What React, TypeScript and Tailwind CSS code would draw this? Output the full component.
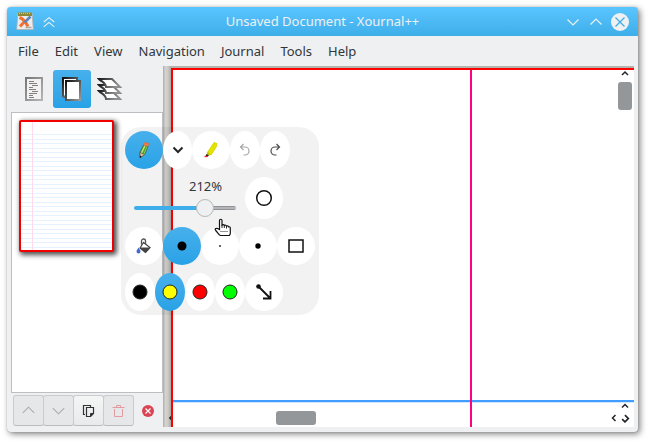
import React, { useState } from "react";

const menus = ["File", "Edit", "View", "Navigation", "Journal", "Tools", "Help"];

function Chevron({ d, size = 16, width = 1, className = "" }: { d: string; size?: number; width?: number; className?: string }) {
  return (
    <svg width={size} height={size} viewBox="0 0 16 16" fill="none" stroke="currentColor" strokeWidth={width} className={className} aria-hidden="true">
      <path d={d} />
    </svg>
  );
}

function AppIcon() {
  return (
    <svg width="18" height="19" viewBox="0 0 18 19" aria-hidden="true">
      <path d="M2 1h14l1.300 16.500H.7z" fill="#ececec" stroke="#b8b2ac" strokeWidth=".8" />
      <path d="M2 .5h14v3.500H2z" fill="#8c8a34" />
      <path d="M3 1.500h12" stroke="#d8cc50" strokeWidth="1" strokeDasharray="1 1" />
      <path d="M3.500 5.500c3 1 6 4 8.500 9" stroke="#f27130" strokeWidth="3" fill="none" />
      <path d="M9 9 4 14.500" stroke="#f27130" strokeWidth="3" />
      <path d="M14.500 4.500 8.500 10.500" stroke="#5b86bd" strokeWidth="2.600" />
      <path d="M9.500 15.500h6" stroke="#a9a9a9" strokeWidth="1.500" />
    </svg>
  );
}

function TextPageIcon() {
  return (
    <svg width="18" height="24" viewBox="0 0 18 24" fill="none" aria-hidden="true">
      <defs>
        <linearGradient id="pageEdge" x1="0" y1="0" x2="1" y2="1">
          <stop offset="0" stopColor="#777" />
          <stop offset="1" stopColor="#b5b5b5" />
        </linearGradient>
      </defs>
      <rect x="1" y="1" width="16" height="22" fill="#f2f2f2" stroke="url(#pageEdge)" strokeWidth="2" />
      <path d="M4 4.500h5M4 6.500h8M7 8.500h6M4 10.500h4M4 12.500h7M7 14.500h6M4 16.500h8M4 18.500h4M4 20.500h5" stroke="#808080" />
    </svg>
  );
}

function PagesIcon() {
  return (
    <svg width="20" height="24" viewBox="0 0 20 24" aria-hidden="true">
      <defs>
        <linearGradient id="sheetEdge" x1="0" y1="0" x2="1" y2="1">
          <stop offset="0" stopColor="#111" />
          <stop offset="1" stopColor="#999" />
        </linearGradient>
      </defs>
      <path d="M1 20V1h14v3" fill="#fff" stroke="url(#sheetEdge)" strokeWidth="2" />
      <path d="M1 20h3" stroke="#666" strokeWidth="2" />
      <rect x="4" y="4" width="14" height="19" fill="#fff" stroke="url(#sheetEdge)" strokeWidth="2" />
    </svg>
  );
}

function LayersIcon() {
  return (
    <svg width="26" height="24" viewBox="0 0 26 24" strokeWidth="2" aria-hidden="true">
      <defs>
        <linearGradient id="layerEdge" x1="0" y1="0" x2="1" y2="0.3">
          <stop offset="0" stopColor="#1c1c1c" />
          <stop offset="1" stopColor="#8f8f8f" />
        </linearGradient>
      </defs>
      {[14, 8, 2].map((y) => (
        <path key={y} d={`M2 ${y}h13l8 8H9c0-4-4-5-7-8z`} fill="#fff" stroke="url(#layerEdge)" />
      ))}
    </svg>
  );
}

function PencilIcon() {
  return (
    <svg width="12" height="18" viewBox="0 0 12 18" aria-hidden="true">
      <path d="M5.500 4 10 5.500 7 13 2 16.500V11z" fill="#4f9a34" stroke="#4d5a37" strokeWidth=".7" />
      <path d="M7 4.500 3.500 12" stroke="#b4ec80" strokeWidth="1.500" />
      <path d="m9 5.500-3 7.500" stroke="#7fd058" strokeWidth="1" />
      <path d="m2 11.500 4.500 2L2 17z" fill="#e0c59b" stroke="#4d4a37" strokeWidth=".6" />
      <path d="m2 14.500 1.800 1L2 17z" fill="#111" />
      <path d="m5.500 4 1-2.500 4.500 1L10 5.500z" fill="#f47a48" stroke="#c4653f" strokeWidth=".5" />
    </svg>
  );
}

function HighlighterIcon() {
  return (
    <svg width="16" height="18" viewBox="0 0 16 18" aria-hidden="true">
      <path d="m11 1.500 3 1-.5 3L8 14l-4-2z" fill="#e3e300" stroke="#d2d200" strokeWidth=".8" />
      <path d="m5 10.500-1.500 3 1.500 1 2.500-.5" fill="#c5c500" />
      <path d="m3.500 13 2.500 1.500L4 16H2z" fill="#1d1d1d" />
      <path d="M1.500 15.500h3" stroke="#e33" strokeWidth="1.400" />
    </svg>
  );
}

function UndoIcon({ flip = false }: { flip?: boolean }) {
  return (
    <svg width="12" height="14" viewBox="0 0 12 14" fill="none" stroke={flip ? "#4d4d4d" : "#a6a6a6"} strokeWidth="1.200" className={flip ? "-scale-x-100" : ""} aria-hidden="true">
      <path d="M4.500 1 1.500 4l3 3M1.500 4h4.500a4 4 0 1 1 0 8H4.500" />
    </svg>
  );
}

function BucketIcon() {
  return (
    <svg width="16" height="16" viewBox="0 0 16 16" aria-hidden="true">
      <path d="M5.500 6.500V3a2 2 0 0 1 4 0v4" fill="none" stroke="#555" strokeWidth="1.300" />
      <path d="m7.500 4.500 6.500 5-4.500 5-5.500-4.500z" fill="#fff" stroke="#444" strokeWidth="1.200" />
      <path d="M4 9.500h10.500l-5 5.500z" fill="#444" />
      <path d="M2.500 9.500c1 2 2 2.700 2 4a2 2 0 0 1-4 0c0-1.300 1-2 2-4z" fill="#4468cf" />
    </svg>
  );
}

function Dot({ r, fill = "#000", ring = false }: { r: number; fill?: string; ring?: boolean }) {
  return (
    <svg width="18" height="18" viewBox="0 0 18 18" aria-hidden="true">
      <circle cx="9" cy="9" r={r} fill={fill} stroke={ring ? "#222" : "none"} strokeWidth="1" />
    </svg>
  );
}

const toolWidths = { slim: "w-[29px]", narrow: "w-[30px]", wide: "w-[38px]" };

function ToolButton({ label, active = false, width = "wide", tall = false, children }: { label: string; active?: boolean; width?: keyof typeof toolWidths; tall?: boolean; children: React.ReactNode }) {
  return (
    <button
      aria-label={label}
      className={`flex shrink-0 items-center justify-center rounded-[50%] text-[#232629] ${toolWidths[width]} ${tall ? "h-[42px]" : "h-[38px]"} ${active ? "bg-linear-to-b from-[#47b0ec] to-[#27a2e6]" : "bg-white"}`}
    >
      {children}
    </button>
  );
}

function Toolbox() {
  const [zoom, setZoom] = useState(74);
  return (
    <section aria-label="Floating toolbox" className="absolute left-[114px] top-[61px] flex flex-col gap-2 rounded-[20px] bg-black/5 p-1">
      <div className="flex">
        <ToolButton label="Pen" active><PencilIcon /></ToolButton>
        <ToolButton label="Pen options" width="slim"><Chevron d="m3.500 5.500 4.500 4.500 4.500-4.500" width={2} /></ToolButton>
        <ToolButton label="Highlighter"><HighlighterIcon /></ToolButton>
        <ToolButton label="Undo" width="narrow"><UndoIcon /></ToolButton>
        <ToolButton label="Redo" width="narrow"><UndoIcon flip /></ToolButton>
      </div>
      <div className="flex">
        <div className="flex w-[120px] flex-col gap-0.5 px-[9px]">
          <label htmlFor="zoom" className="pl-[55px] leading-[18px]">212%</label>
          <input
            id="zoom"
            type="range"
            min={0}
            max={100}
            value={zoom}
            onChange={(e) => setZoom(Number(e.target.value))}
            className="h-[22px] w-full appearance-none bg-transparent [&::-webkit-slider-runnable-track]:h-1 [&::-webkit-slider-runnable-track]:rounded-full [&::-webkit-slider-runnable-track]:bg-[linear-gradient(to_right,#3daee9_70%,transparent_70%),linear-gradient(to_bottom,#8f9194_1px,#b4b6b8_1px,#b4b6b8_3px,#8f9194_3px)] [&::-webkit-slider-thumb]:-mt-[7px] [&::-webkit-slider-thumb]:size-[18px] [&::-webkit-slider-thumb]:appearance-none [&::-webkit-slider-thumb]:rounded-full [&::-webkit-slider-thumb]:border [&::-webkit-slider-thumb]:border-[#b4b6b8] [&::-webkit-slider-thumb]:bg-[#eff0f1]"
          />
        </div>
        <ToolButton label="Draw ellipse" tall>
          <svg width="18" height="18" viewBox="0 0 18 18" fill="none" stroke="#111" strokeWidth="1.500" aria-hidden="true"><circle cx="9" cy="9" r="7.300" /></svg>
        </ToolButton>
      </div>
      <div className="flex">
        <ToolButton label="Fill"><BucketIcon /></ToolButton>
        <ToolButton label="Thick" active><Dot r={4.5} /></ToolButton>
        <ToolButton label="Very fine"><Dot r={1} fill="#333" /></ToolButton>
        <ToolButton label="Fine"><Dot r={2.7} /></ToolButton>
        <ToolButton label="Draw rectangle">
          <svg width="16" height="14" viewBox="0 0 16 14" fill="none" stroke="#111" strokeWidth="1.500" aria-hidden="true"><rect x="1" y="1" width="14" height="12" /></svg>
        </ToolButton>
      </div>
      <div className="flex">
        <ToolButton label="Black" width="narrow"><Dot r={7} ring /></ToolButton>
        <ToolButton label="Yellow" width="narrow" active><Dot r={7} fill="#ffff00" ring /></ToolButton>
        <ToolButton label="Red" width="narrow"><Dot r={7} fill="#ff0000" ring /></ToolButton>
        <ToolButton label="Green" width="narrow"><Dot r={7} fill="#00ff00" ring /></ToolButton>
        <ToolButton label="Draw arrow">
          <svg width="18" height="18" viewBox="0 0 18 18" fill="none" stroke="#111" strokeWidth="1.800" aria-hidden="true">
            <circle cx="3.500" cy="3.500" r="2.300" fill="#111" stroke="none" />
            <path d="m3.500 3.500 12 12M15.500 8v7.500H8" />
          </svg>
        </ToolButton>
      </div>
      <svg width="18" height="20" viewBox="0 0 18 20" className="absolute left-[93px] top-[91px]" aria-hidden="true">
        <path d="M5.500 11.500V2.500a1.200 1.200 0 0 1 2.500 0v4.500c1-.8 2-.4 2.300.400 1-.6 1.900-.1 2.200.6 1-.4 2 0 2.100.8 1-.2 1.700.3 1.700 1.200v5c0 1-.3 2-1 2.500H6.500c-1.700-.5-2.500-2.500-4.800-5-.6-.8-.5-1.600 0-2 1-.6 2.300 0 3.800 1z" fill="#fff" stroke="#111" strokeWidth="1.200" />
        <path d="M8 7v3M10.300 7.500V10M12.500 8v2.500" stroke="#111" strokeWidth=".9" />
        <path d="M6.500 13.500h8" stroke="#111" strokeWidth=".9" strokeDasharray="1 1" />
      </svg>
    </section>
  );
}

const sideButton = "flex h-[31px] w-[31px] items-center justify-center rounded-[3px] border border-[#c9cbcd] border-b-[#b9bbbd]";

function Sidebar() {
  return (
    <aside className="flex w-[156px] shrink-0 flex-col pb-px pl-1">
      <div className="flex items-center py-1 pl-1">
        <button aria-label="Contents" className="flex size-[38px] items-center justify-center"><TextPageIcon /></button>
        <button aria-label="Page preview" className="flex size-[38px] items-center justify-center rounded-[3px] bg-linear-to-b from-[#47b0ec] to-[#27a2e6]"><PagesIcon /></button>
        <button aria-label="Layers" className="flex size-[38px] items-center justify-center"><LayersIcon /></button>
      </div>
      <div className="flex-1 border border-[#bcbec1] bg-white p-[7px]">
        <button aria-label="Page 1" className="block h-[132px] w-[95px] rounded-xs border-2 border-[#f00000] bg-white shadow-[2px_2px_5px_1px_#000000b0]">
          <svg width="91" height="128" viewBox="0 0 91 128" aria-hidden="true">
            {Array.from({ length: 26 }, (_, i) => (
              <path key={i} d={`M0 ${Math.round(12 + i * 4.5) + 0.5}h91`} stroke="#e4f3ff" />
            ))}
            <path d="M11.500 0v128" stroke="#ffd9ee" />
          </svg>
        </button>
      </div>
      <div className="flex items-center pl-0.5 pt-0.5">
        <button aria-label="Move page up" className={`${sideButton} bg-[#e6e7e9] text-[#a9abad]`}><Chevron d="m1 11 7-7 7 7" size={13} width={1.3} /></button>
        <button aria-label="Move page down" className={`${sideButton} -ml-px bg-[#e6e7e9] text-[#a9abad]`}><Chevron d="m1 5 7 7 7-7" size={13} width={1.3} /></button>
        <button aria-label="Copy page" className={`${sideButton} -ml-px bg-linear-to-b from-[#f4f5f5] to-[#e9eaeb]`}>
          <svg width="13" height="13" viewBox="0 0 13 13" fill="none" stroke="#333" aria-hidden="true">
            <path d="M3 10.500H1.500v-9h7V3M4.500 3.500h7v6l-3 3h-4z" strokeWidth="1.200" />
            <path d="M11.500 9.500h-3v3z" fill="#333" />
          </svg>
        </button>
        <button aria-label="Delete page" className={`${sideButton} -ml-px bg-[#e6e7e9]`}>
          <svg width="13" height="13" viewBox="0 0 13 13" fill="none" stroke="#e39aa2" aria-hidden="true">
            <path d="M.5 3.500h12M4.500 3.500v-2h4v2M2.500 5v7.500h8V5" />
          </svg>
        </button>
        <button aria-label="Close sidebar" className="ml-2">
          <svg width="12" height="12" viewBox="0 0 12 12" aria-hidden="true">
            <circle cx="6" cy="6" r="6" fill="#da4453" />
            <path d="m3.500 3.500 5 5m0-5-5 5" stroke="#fff" strokeWidth="1.200" />
          </svg>
        </button>
      </div>
    </aside>
  );
}

function Canvas() {
  return (
    <main className="relative flex min-w-0 flex-1 bg-[#b5b3b0]">
      <div className="relative w-2 shrink-0 bg-[linear-gradient(to_right,#b2b4b6_1px,#d7d4cf_2px,#cecbc6_5px,#a9a8a5_8px)] text-[#232629]">
        <Chevron d="m10 3-5 5 5 5" size={10} width={3} className="absolute bottom-1 left-1" />
      </div>
      <div className="relative mt-0.5 flex-1 overflow-hidden border-l-2 border-t-2 border-[#ff0000] bg-white text-[#232629]">
        <div className="absolute inset-x-0 bottom-6 h-[3px] border-b border-[#cfe8ff] bg-[#409cff]" />
        <div className="absolute inset-y-0 left-[297px] w-0.5 bg-[#ff0080]" />
        <div className="absolute bottom-0 right-0.5 top-0 flex w-[14px] flex-col items-center">
          <Chevron d="m2 10 6-6 6 6" size={8} width={3} />
          <div className="mt-1 h-7 w-full rounded-[3px] bg-[#93979a]" />
          <Chevron d="m2 11 6-6 6 6" size={8} width={3} className="mb-[17px] mt-auto" />
        </div>
        <div className="absolute inset-x-0 bottom-0.5 flex h-[14px] items-center pl-[103px] pr-0.5">
          <div className="h-full w-10 rounded-[3px] bg-[#93979a]" />
          <Chevron d="m11 2-6 6 6 6" size={8} width={3} className="ml-auto" />
          <span className="flex w-[14px] justify-center">
            <Chevron d="m7 2 6 6-6 6M2 9l5 5 5-5" size={9} width={3} />
          </span>
        </div>
      </div>
    </main>
  );
}

export default function App() {
  return (
    <div className="flex h-screen min-h-[440px] bg-white pb-[13px] pl-[7px] pr-[13px] pt-[7px] font-['Noto_Sans',sans-serif] text-[13px] text-[#31363b]">
      <div className="flex min-w-0 flex-1 flex-col rounded bg-[#eff0f1] shadow-[2px_2px_6px_#00000080,0_0_1px_#00000060]">
        <header className="flex h-[29px] shrink-0 items-center rounded-t bg-linear-to-b from-[#5ac5ff] to-[#3daee9] text-[#eff0f1]">
          <div className="flex w-20 items-center gap-2 pl-[9px]">
            <AppIcon />
            <button aria-label="Shade window">
              <Chevron d="m2 8 6-5 6 5M2 13.500l6-5 6 5" size={14} width={1.3} />
            </button>
          </div>
          <h1 className="flex-1 text-center">Unsaved Document - Xournal++</h1>
          <div className="flex w-20 items-center justify-end gap-[7px] pr-[9px]">
            <button aria-label="Minimize"><Chevron d="m2.500 5.500 5.500 5.500 5.500-5.500" width={1.2} /></button>
            <button aria-label="Maximize"><Chevron d="m2.500 10.500 5.500-5.500 5.500 5.500" width={1.2} /></button>
            <button aria-label="Close" className="flex size-[18px] items-center justify-center rounded-full bg-[#eff0f1] text-[#3daee9]">
              <Chevron d="m3.500 3.500 9 9m0-9-9 9" width={1.3} />
            </button>
          </div>
        </header>
        <nav className="flex h-[30px] shrink-0 items-center gap-4 pl-[11px] pt-0.5">
          {menus.map((m) => (
            <button key={m}>{m}</button>
          ))}
        </nav>
        <div className="relative flex min-h-0 flex-1 pb-[5px] pr-1">
          <Sidebar />
          <Canvas />
          <Toolbox />
        </div>
      </div>
    </div>
  );
}
